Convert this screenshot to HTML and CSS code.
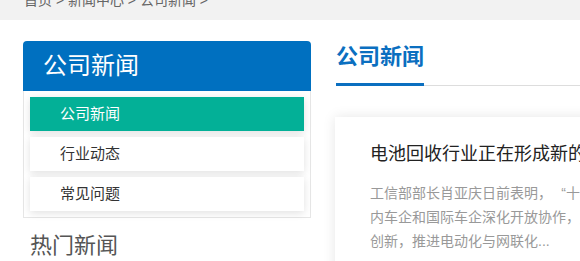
FILE: index.html
```
<!DOCTYPE html>
<html lang="zh-CN">
<head>
    <meta charset="UTF-8">
    <meta name="viewport" content="width=device-width, initial-scale=1.0">
    <title>公司新闻</title>
    <link rel="stylesheet" href="styles.css">
</head>
<body>
    <div class="crumbs">
        <div class="wrap">
            <p>首页 &gt; 新闻中心 &gt; 公司新闻 &gt;</p>
        </div>
    </div>
    <div class="wrap main">
        <aside class="side">
            <h2 class="side-title">公司新闻</h2>
            <ul class="side-menu">
                <li class="active"><a href="#">公司新闻</a></li>
                <li><a href="#">行业动态</a></li>
                <li><a href="#">常见问题</a></li>
            </ul>
            <h3 class="hot-title">热门新闻</h3>
        </aside>
        <div class="content">
            <div class="content-title"><span>公司新闻</span></div>
            <div class="news-card">
                <h4>电池回收行业正在形成新的发展格局</h4>
                <p>工信部部长肖亚庆日前表明，<span class="q q-open">“</span>十四五<span class="q q-close">”</span>时期将支持国内车企和国际车企深化开放协作，加强核心零部件协同创新，推进电动化与网联化...</p>
            </div>
        </div>
    </div>
</body>
</html>
```
FILE: styles.css
```
body {
    margin: 0;
    font-family: "Liberation Sans", "Noto Sans CJK SC", sans-serif;
    color: #333;
    background: #fff;
}
.wrap {
    width: 1160px;
    padding: 0 23px;
}
.crumbs {
    background-color: #f2f2f2;
    height: 20px;
    overflow: hidden;
}
.crumbs p {
    margin: -7px 0 0 1px;
    font-size: 14px;
    line-height: 14px;
    color: #666;
}
.main {
    display: flex;
    gap: 24px;
    padding-top: 21px;
}
.side {
    width: 288px;
    flex-shrink: 0;
}
.side-title {
    margin: 0;
    height: 50px;
    line-height: 50px;
    padding-left: 20px;
    font-size: 24px;
    font-weight: normal;
    color: #fff;
    background-color: #0070c0;
    border-radius: 4px 4px 0 0;
}
.side-menu {
    list-style: none;
    margin: 0;
    padding: 6px;
    border: 1px solid #e6e6e6;
    border-top: none;
    display: flex;
    flex-direction: column;
    gap: 6px;
}
.side-menu li {
    background-color: #fff;
    box-shadow: 0 2px 8px rgba(0, 0, 0, 0.12);
}
.side-menu a {
    display: block;
    height: 34px;
    line-height: 34px;
    padding-left: 30px;
    font-size: 15px;
    color: #333;
    text-decoration: none;
}
.side-menu li.active {
    background-color: #03b097;
}
.side-menu li.active a {
    color: #fff;
}
.hot-title {
    margin: 16px 0 0 7px;
    font-size: 22px;
    font-weight: normal;
    line-height: 24px;
    color: #555;
}
.content {
    flex: 1;
    padding-left: 1px;
}
.content-title {
    border-bottom: 1px solid #ddd;
}
.content-title span {
    display: inline-block;
    padding: 5px 0 15px;
    font-size: 22px;
    font-weight: bold;
    line-height: 22px;
    color: #0b6fc0;
    border-bottom: 3px solid #0b6fc0;
    margin-bottom: -1px;
}
.news-card {
    margin: 31px 0 0 -1px;
    padding: 22px 35px 30px;
    background-color: #fff;
    box-shadow: 0 0 12px rgba(0, 0, 0, 0.1);
}
.news-card h4 {
    margin: 0 0 12px;
    font-size: 18px;
    font-weight: normal;
    line-height: 30px;
    color: #222;
}
.news-card p {
    margin: 0;
    width: 336px;
    font-size: 14px;
    line-height: 24px;
    color: #999;
}
/* full-width quotes */
.news-card .q {
    display: inline-block;
    width: 1em;
}
.news-card .q-open {
    text-align: right;
}
.news-card .q-close {
    text-align: left;
}
```
